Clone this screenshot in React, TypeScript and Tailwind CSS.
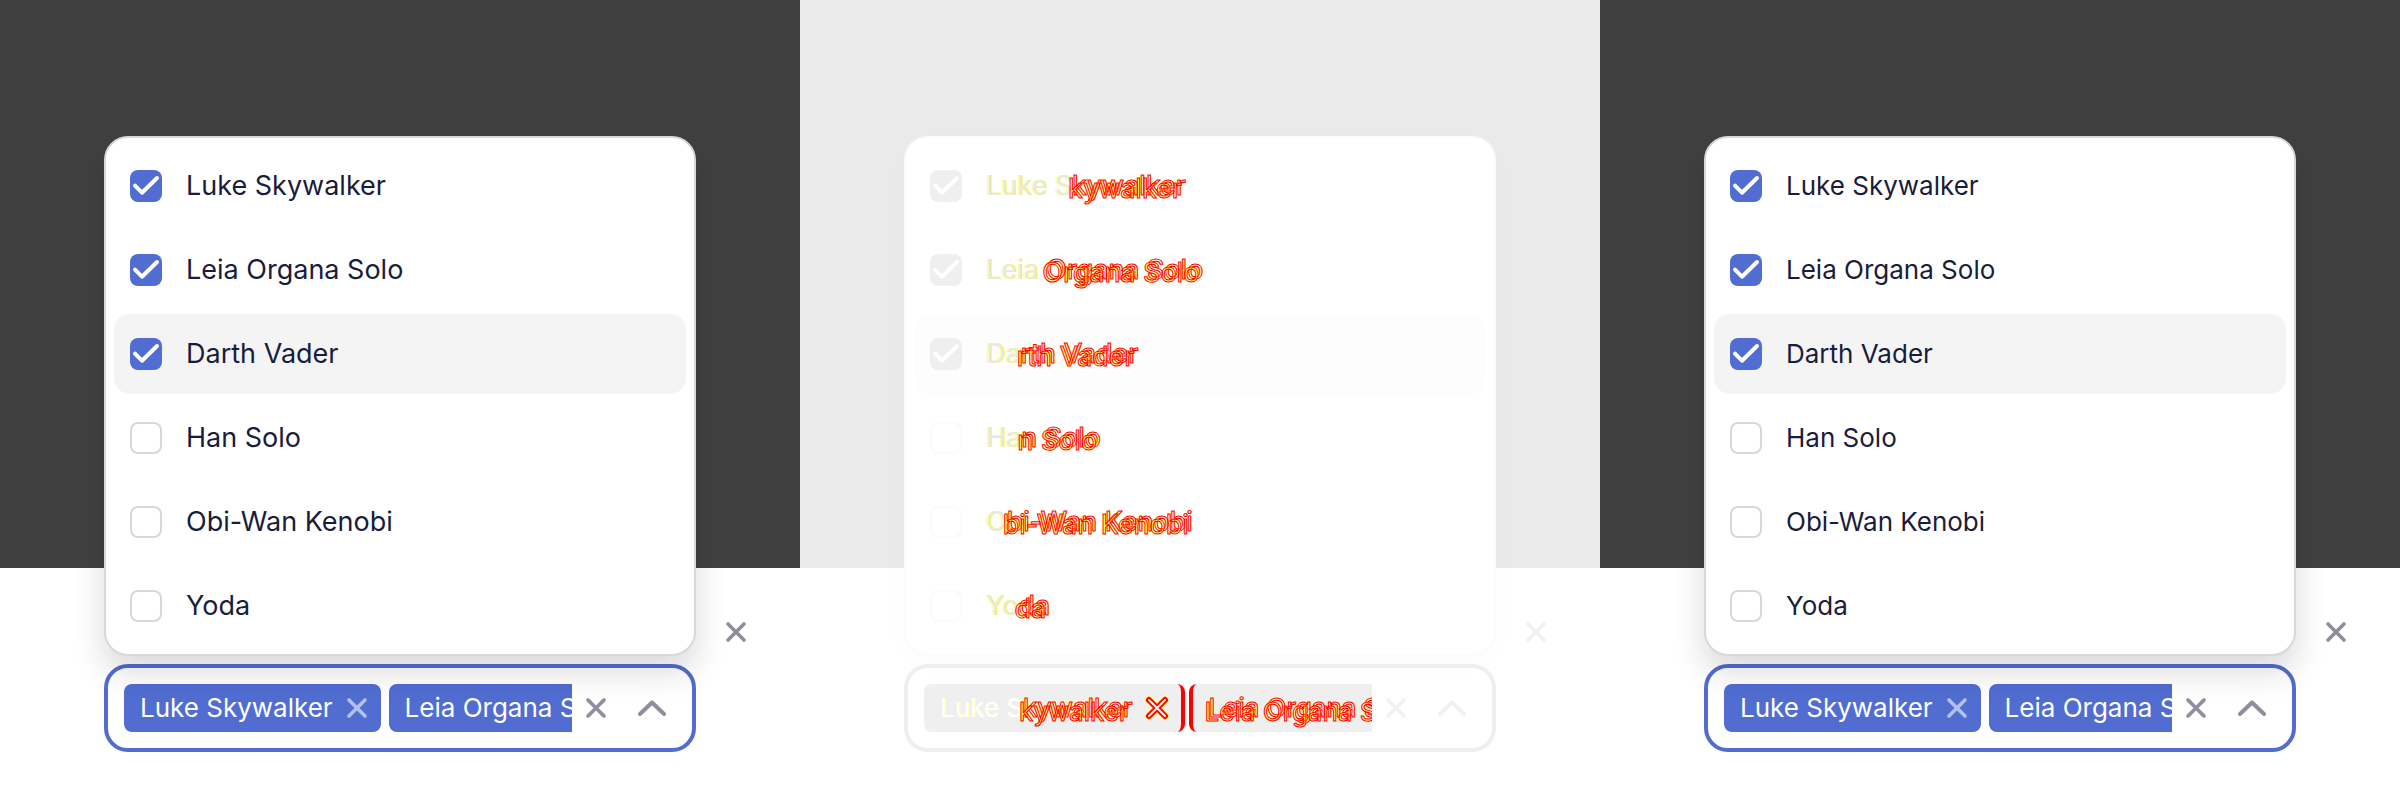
import React, { useState } from "react";

type Variant = "before" | "diff" | "after";

const PEOPLE: { name: string; split: number; checked: boolean }[] = [
  { name: "Luke Skywalker", split: 6, checked: true },
  { name: "Leia Organa Solo", split: 4, checked: true },
  { name: "Darth Vader", split: 2, checked: true },
  { name: "Han Solo", split: 2, checked: false },
  { name: "Obi-Wan Kenobi", split: 1, checked: false },
  { name: "Yoda", split: 2, checked: false },
];

const CROSS = "M2 2 18 18M18 2 2 18";

function Cross({ className, changed }: { className: string; changed?: boolean }) {
  return (
    <svg viewBox="0 0 20 20" className={`size-5 overflow-visible ${className}`} fill="none" strokeLinecap="round">
      {changed ? (
        <>
          <path d={CROSS} stroke="#ffff00" strokeWidth="7" />
          <path d={CROSS} stroke="#ff0000" strokeWidth="6" />
          <path d={CROSS} stroke="#efefef" strokeWidth="2" />
        </>
      ) : (
        <path d={CROSS} stroke="currentColor" strokeWidth="3.6" />
      )}
    </svg>
  );
}

function DiffText({ text, split, onChip }: { text: string; split: number; onChip?: boolean }) {
  const head = text.slice(0, split);
  const tail = text.slice(split);
  const headStyle = onChip
    ? "text-white [text-shadow:1px_0_0_#ffffaa]"
    : "text-[#e8e8e8] [text-shadow:1px_0_0_#ffff33,-1px_0_0_#ffff88]";
  return (
    <span className="whitespace-pre">
      {head && <span className={headStyle}>{head}</span>}
      <span
        data-tail={tail}
        className="relative text-[#f4f4f4] [-webkit-text-stroke:1px_#ff0000] [text-shadow:1px_0_0_#ffff00,-1px_0_0_#ffff00] after:absolute after:-left-1 after:top-0 after:text-transparent after:[-webkit-text-stroke:1px_#ff0000] after:[text-shadow:1px_0_0_#ffff0088] after:content-[attr(data-tail)]"
      >
        {tail}
      </span>
    </span>
  );
}

function Label({ text, split, variant, onChip }: { text: string; split: number; variant: Variant; onChip?: boolean }) {
  return variant === "diff" ? <DiffText text={text} split={split} onChip={onChip} /> : <>{text}</>;
}

function Option({ name, split, checked, active, variant }: { name: string; split: number; checked: boolean; active: boolean; variant: Variant }) {
  const [on, setOn] = useState(checked);
  const diff = variant === "diff";
  const box = on
    ? diff ? "bg-[#efefef]" : "bg-[#516dd1]"
    : diff ? "border-2 border-[#fbfbfb] bg-white" : "border-2 border-[#d8d8d8] bg-white";
  const row = active ? (diff ? "bg-[#fdfdfd]" : "bg-[#f4f4f4]") : "";
  return (
    <li>
      <label className={`flex h-20 items-center gap-6 rounded-2xl px-4 ${row}`}>
        <span className="relative grid size-8 shrink-0 place-items-center">
          <input type="checkbox" checked={on} onChange={() => setOn(!on)} className={`size-8 appearance-none rounded-lg ${box}`} />
          {on && (
            <svg viewBox="0 0 32 32" className="pointer-events-none absolute inset-0 size-8" fill="none" stroke="white" strokeWidth="4" strokeLinecap="round" strokeLinejoin="round">
              <path d="M5 15.7 12 22.7 27 8" />
            </svg>
          )}
        </span>
        <span>
          <Label text={name} split={split} variant={variant} />
        </span>
      </label>
    </li>
  );
}

function Chip({ name, split, variant, edge }: { name: string; split: number; variant: Variant; edge: "left" | "right" }) {
  const diff = variant === "diff";
  const edgeStyle = edge === "right" ? "border-r-4" : "border-l-4";
  return (
    <span
      className={`flex h-12 shrink-0 items-center gap-3.5 whitespace-nowrap rounded-lg pl-4 pr-3.5 text-[26px] ${
        diff ? `border-[#ff0000] bg-[#efefef] ${edgeStyle}` : "bg-[#516dd1] text-white"
      }`}
    >
      <Label text={name} split={split} variant={variant} onChip />
      <button type="button" aria-label={`Remove ${name}`}>
        <Cross changed={diff} className="text-[#b3bfec]" />
      </button>
    </span>
  );
}

function Panel({ variant }: { variant: Variant }) {
  const diff = variant === "diff";
  const icon = diff ? "text-[#f1f1f1]" : "text-[#8d8e9e]";
  const size = variant === "after" ? "text-[26px]" : "text-[27px]";
  return (
    <section className={`relative flex min-w-0 flex-1 flex-col overflow-hidden bg-white ${size}`}>
      <div className={`absolute inset-x-0 top-0 h-[568px] ${diff ? "bg-[#eaeaea]" : "bg-[#404040]"}`} />
      <div className="relative flex pl-[104px] pt-[136px]">
        <div className="flex min-w-0 flex-1 flex-col gap-2">
          <ul
            className={`relative flex flex-col gap-1 rounded-3xl border-2 bg-white p-2 ${
              diff ? "border-[#fbfbfb] shadow-[0_8px_32px_#00000004]" : "border-[#d8d8d8] text-[#191c3b] shadow-[0_16px_32px_#00000026]"
            }`}
          >
            {PEOPLE.map((p, i) => (
              <Option key={p.name} {...p} active={i === 2} variant={variant} />
            ))}
          </ul>
          <div className={`flex h-22 items-center rounded-3xl border-4 pl-4 pr-[26px] ${diff ? "border-[#efefef]" : "border-[#516dd1]"}`}>
            <div className={`flex min-w-0 flex-1 overflow-hidden ${diff ? "gap-1" : "gap-2"}`}>
              <Chip {...PEOPLE[0]} edge="right" variant={variant} />
              <Chip {...PEOPLE[1]} split={0} edge="left" variant={variant} />
            </div>
            <button type="button" aria-label="Clear all" className="ml-3.5">
              <Cross className={icon} />
            </button>
            <button type="button" aria-label="Close list" className={`ml-8 ${icon}`}>
              <svg viewBox="0 0 28 16" className="h-4 w-7" fill="none" stroke="currentColor" strokeWidth="4" strokeLinecap="round" strokeLinejoin="round">
                <path d="M2 14 14 2.5 26 14" />
              </svg>
            </button>
          </div>
        </div>
        <div className="flex w-26 shrink-0 items-end pb-[110px] pl-[30px]">
          <button type="button" aria-label="Remove field">
            <Cross className={icon} />
          </button>
        </div>
      </div>
    </section>
  );
}

export default function App() {
  return (
    <main className="flex min-h-screen w-full bg-white font-['Inter',sans-serif] leading-10">
      <Panel variant="before" />
      <Panel variant="diff" />
      <Panel variant="after" />
    </main>
  );
}
